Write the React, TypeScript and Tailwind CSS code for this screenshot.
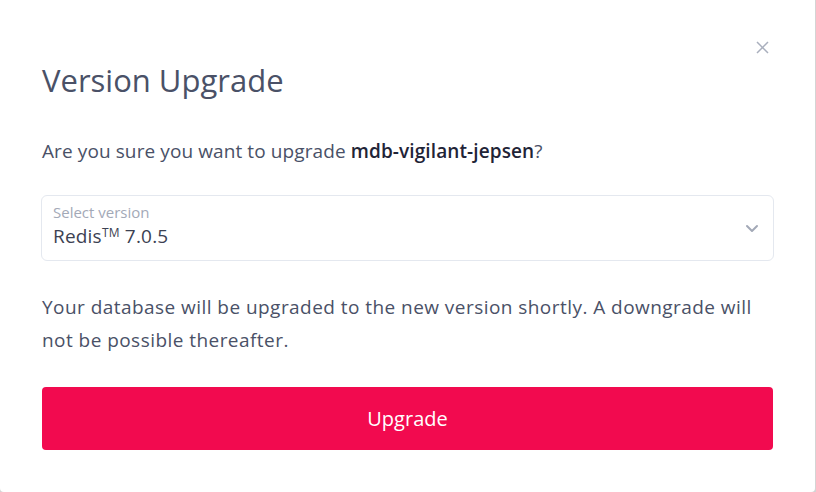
import React from "react";

export default function App() {
  return (
    <div className="w-[816px] h-[492px] bg-[#d4d4d4] overflow-hidden" style={{ fontFamily: "'Open Sans', 'Noto Sans', sans-serif" }}>
      <div className="relative w-[815px] h-[492px] bg-white rounded-b-[4px] px-[42px] pt-[60px]">
        <button className="absolute right-[46px] top-[41px] text-[#a9afbd]" aria-label="Close">
          <svg width="13" height="13" viewBox="0 0 13 13" fill="none" stroke="currentColor" strokeWidth="1.5">
            <path d="M1 1l11 11M12 1L1 12" />
          </svg>
        </button>

        <h1 className="text-[31px] leading-[40px] text-[#4a5167]">Version Upgrade</h1>

        <p className="mt-[37px] text-[19px] leading-[28px] tracking-[0.1px] text-[#4a5167]">
          Are you sure you want to upgrade <span className="font-semibold text-[#1f2437]">mdb-vigilant-jepsen</span>?
        </p>

        <div className="mt-[30px] -ml-px w-[733px] h-[66px] border border-[#e4e8ef] rounded-[6px] flex items-center justify-between pl-[11px] pr-[14px]">
          <div className="flex flex-col">
            <span className="text-[15px] leading-[18px] text-[#a3a9b7]">Select version</span>
            <span className="text-[19px] leading-[28px] tracking-[0.2px] text-[#3c4152] mt-[1px]">
              Redis<span className="relative -top-[6px] text-[12px]">TM</span> 7.0.5
            </span>
          </div>
          <svg width="14" height="9" viewBox="0 0 14 9" fill="none" stroke="#a3a9b7" strokeWidth="2" strokeLinecap="round" strokeLinejoin="round">
            <path d="M2 2l5 5 5-5" />
          </svg>
        </div>

        <p className="mt-[30px] text-[19px] leading-[33px] tracking-[0.45px] text-[#4a5167] w-[731px]">
          Your database will be upgraded to the new version shortly. A downgrade will not be possible thereafter.
        </p>

        <button className="mt-[30px] w-[731px] h-[63px] bg-[#f20a4f] rounded-[4px] text-white text-[20px]">
          Upgrade
        </button>
      </div>
    </div>
  );
}
